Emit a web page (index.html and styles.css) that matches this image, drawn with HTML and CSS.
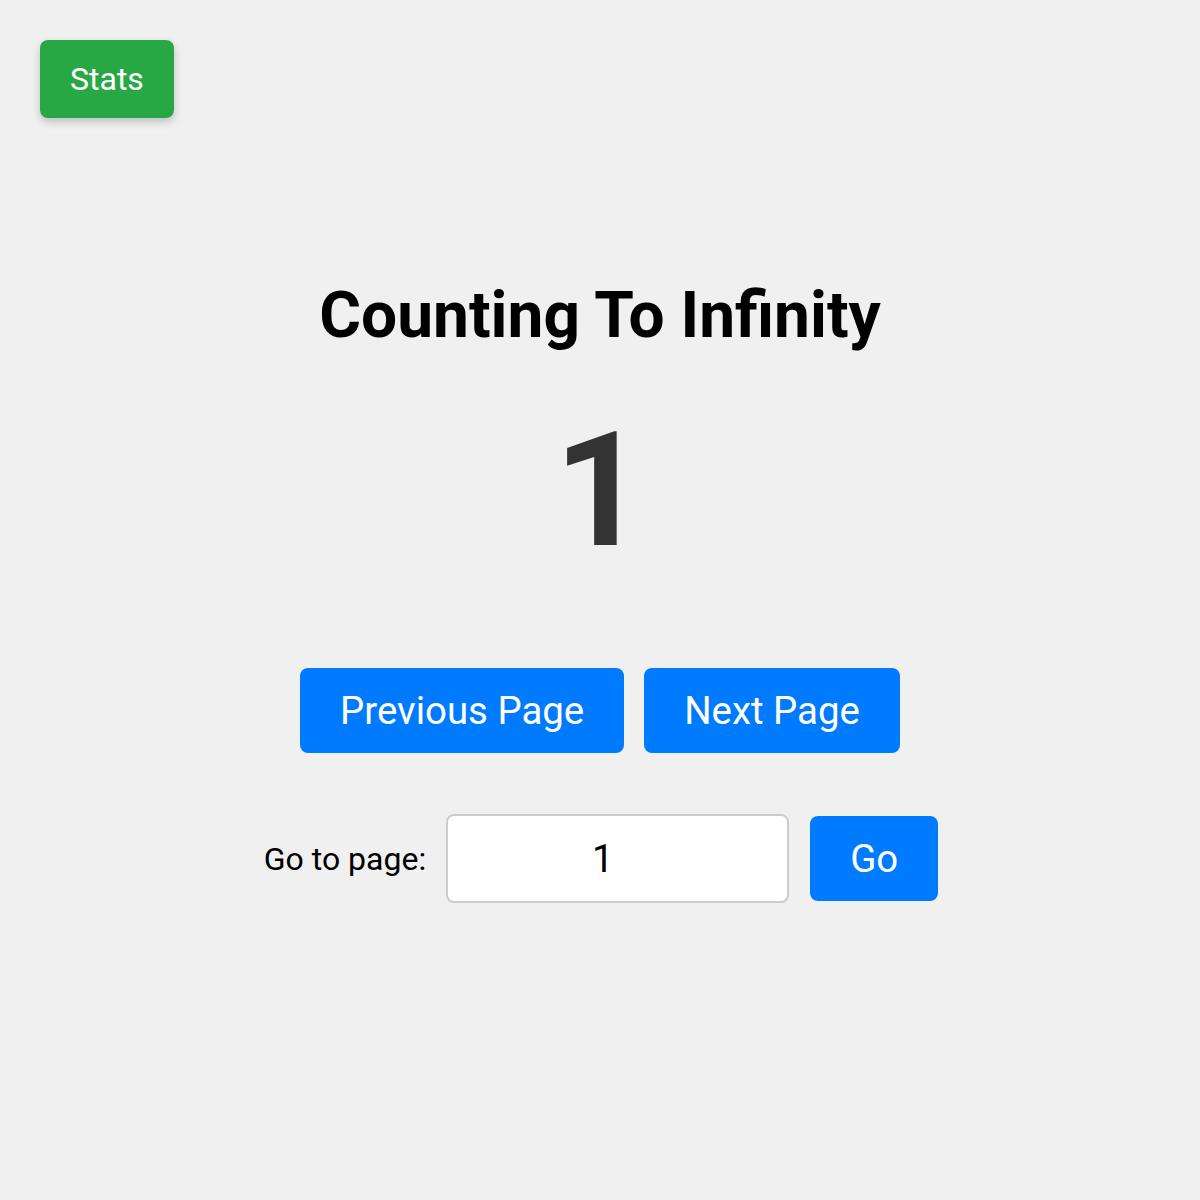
FILE: index.html
```html
<!DOCTYPE html>
<html lang="en">
<head>
<meta charset="utf-8">
<title>Counting To Infinity</title>
<link rel="stylesheet" href="styles.css">
</head>
<body>
<header class="top">
  <button class="stats-btn" type="button">Stats</button>
</header>
<main class="main">
  <h1 class="title">Counting To Infinity</h1>
  <div class="number">1</div>
  <div class="nav-row">
    <button class="btn" type="button">Previous Page</button>
    <button class="btn" type="button">Next Page</button>
  </div>
  <div class="goto-row">
    <label class="goto-label" for="page">Go to page:</label>
    <input class="goto-input" id="page" type="text" value="1">
    <button class="btn go-btn" type="button">Go</button>
  </div>
</main>
</body>
</html>
```

FILE: styles.css
```css
html, body {
  margin: 0;
  padding: 0;
}
body {
  background: #f0f0f0;
  font-family: Roboto, "Liberation Sans", Arial, sans-serif;
  color: #000;
  min-height: 1200px;
  box-sizing: border-box;
  padding: 40px;
}
.top {
  display: flex;
}
.stats-btn {
  font-family: inherit;
  font-size: 32px;
  line-height: normal;
  color: #fff;
  background: #28a745;
  border: none;
  border-radius: 8px;
  padding: 20px 30px;
  box-shadow: 0 4px 8px rgba(0, 0, 0, 0.2);
  cursor: pointer;
}
.main {
  display: flex;
  flex-direction: column;
  align-items: center;
  margin-top: 160px;
  margin-left: -40px;
  margin-right: -40px;
}
.title {
  font-size: 64px;
  font-weight: 700;
  line-height: normal;
  margin: 0 0 44px;
}
.number {
  font-size: 160px;
  font-weight: 700;
  color: #333;
  line-height: normal;
}
.nav-row {
  display: flex;
  gap: 20px;
  margin-top: 84px;
}
.btn {
  font-family: inherit;
  font-size: 38.4px;
  line-height: normal;
  color: #fff;
  background: #007bff;
  border: none;
  border-radius: 8px;
  padding: 20px 40px;
  cursor: pointer;
}
.goto-row {
  display: flex;
  align-items: center;
  gap: 20px;
  margin-top: 61px;
  padding-left: 2px;
}
.goto-label {
  font-size: 32px;
  color: #000;
}
.goto-input {
  font-family: inherit;
  font-size: 38.4px;
  line-height: normal;
  color: #000;
  background: #fff;
  text-align: center;
  box-sizing: border-box;
  width: 343px;
  height: 89px;
  padding: 20px 50px 20px 20px;
  border: 2px solid #ccc;
  border-radius: 8px;
  outline: none;
}
.go-btn {
  padding: 20px 40px;
  margin-left: 1px;
}
```
